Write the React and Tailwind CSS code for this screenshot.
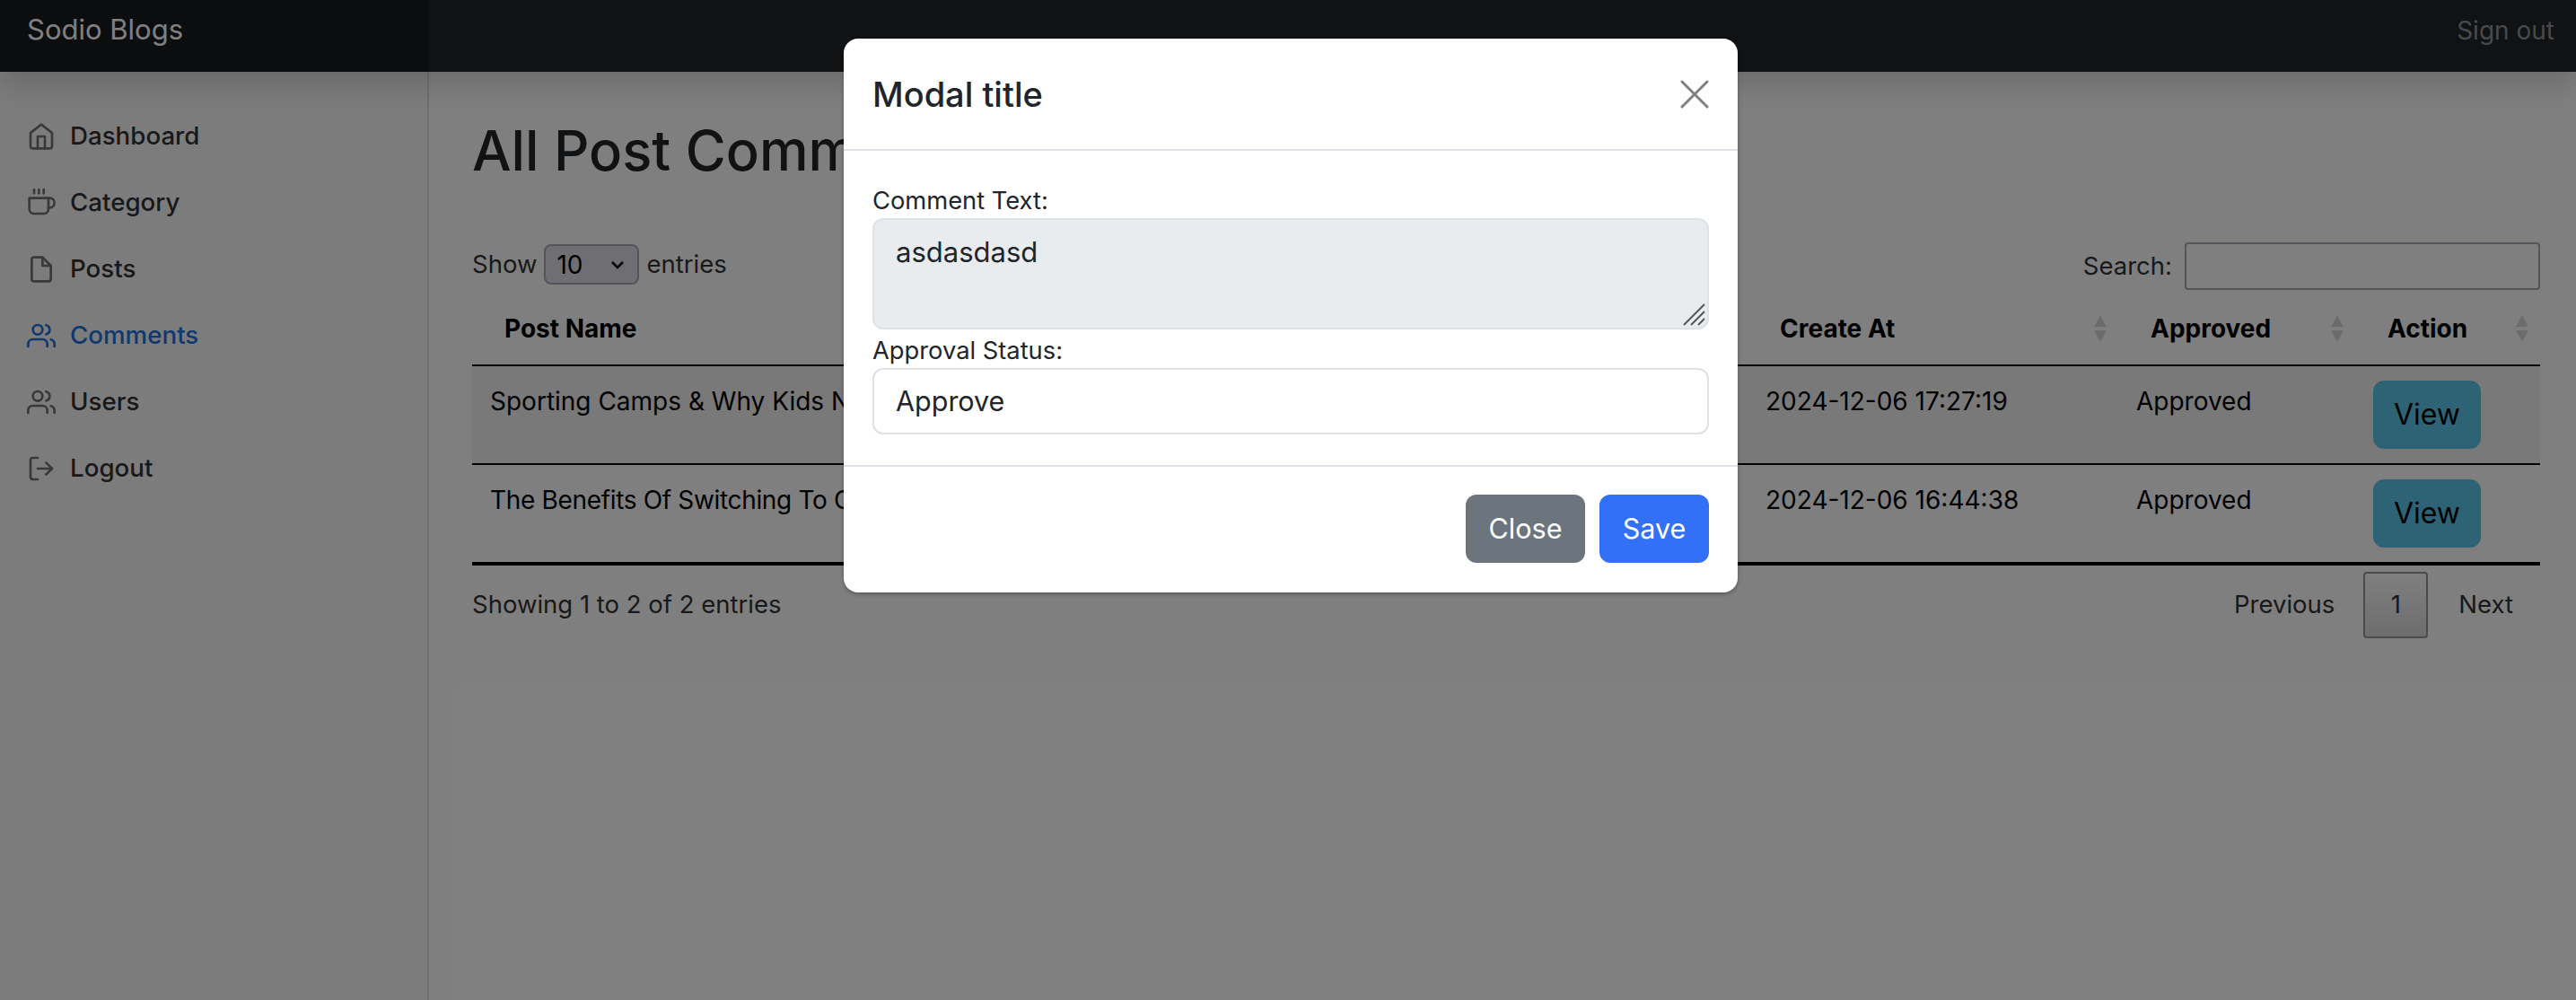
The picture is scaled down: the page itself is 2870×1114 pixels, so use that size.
import { FiHome, FiCoffee, FiFile, FiUsers, FiLogOut } from "react-icons/fi";

const navItems = [
  { label: "Dashboard", icon: FiHome },
  { label: "Category", icon: FiCoffee },
  { label: "Posts", icon: FiFile },
  { label: "Comments", icon: FiUsers, active: true },
  { label: "Users", icon: FiUsers },
  { label: "Logout", icon: FiLogOut },
];

const rows = [
  { post: "Sporting Camps & Why Kids Need Them", date: "2024-12-06 17:27:19", striped: true },
  { post: "The Benefits Of Switching To Clean Food", date: "2024-12-06 16:44:38" },
];

function SortArrows() {
  return (
    <svg width="16" height="30" viewBox="0 0 16 30" className="shrink-0 fill-black/15">
      <path d="M8 0 L15 13 L1 13 Z" />
      <path d="M8 30 L15 17 L1 17 Z" />
    </svg>
  );
}

function HeaderCell({ children }) {
  return (
    <th className="pl-9 pr-3 pb-[19px] pt-[22px] text-left font-bold">
      <div className="flex items-center justify-between">
        {children}
        <SortArrows />
      </div>
    </th>
  );
}

function Sidebar() {
  return (
    <aside className="w-[478px] shrink-0 bg-[#f8f9fa] pt-[35px] shadow-[inset_-2px_0_0_rgba(0,0,0,0.1)]">
      {navItems.map((item) => {
        const Icon = item.icon;
        return (
          <div
            key={item.label}
            className={`flex h-[74px] items-center gap-4 pl-[30px] text-[27.7px] font-medium ${
              item.active ? "text-[#2470dc]" : "text-[#333333]"
            }`}
          >
            <Icon
              size={32}
              className={item.active ? "text-[#2470dc]" : "text-[#727272]"}
            />
            {item.label}
          </div>
        );
      })}
    </aside>
  );
}

function CommentsTable() {
  return (
    <table className="w-full table-fixed border-collapse text-[28px] text-black">
      <colgroup>
        <col className="w-[1421px]" />
        <col className="w-[413px]" />
        <col className="w-[264px]" />
        <col />
      </colgroup>
      <thead>
        <tr className="border-b-2 border-black">
          <HeaderCell>Post Name</HeaderCell>
          <HeaderCell>Create At</HeaderCell>
          <HeaderCell>Approved</HeaderCell>
          <HeaderCell>Action</HeaderCell>
        </tr>
      </thead>
      <tbody>
        {rows.map((row, i) => (
          <tr
            key={row.date}
            className={`align-top ${row.striped ? "bg-black/5" : ""} ${
              i === rows.length - 1 ? "border-b-4 border-black" : "border-b-2 border-black"
            }`}
          >
            <td className={`px-5 pt-[18px] pb-4 whitespace-nowrap ${row.striped ? "" : "tracking-[-0.012em]"}`}>
              {row.post}
            </td>
            <td className="px-5 pt-[18px] pb-4">{row.date}</td>
            <td className="px-5 pt-[18px] pb-4">Approved</td>
            <td className="px-5 pt-4 pb-4">
              <button className="h-[76px] w-[120px] rounded-xl bg-[#5cc6ea] text-[32px] text-black">
                View
              </button>
            </td>
          </tr>
        ))}
      </tbody>
    </table>
  );
}

function Modal() {
  return (
    <div className="absolute inset-0 z-20 flex justify-center bg-black/50 pl-1.5 pt-[43px]">
      <div className="h-[617px] w-[996px] rounded-2xl bg-white text-[#212529] shadow-[0_2px_4px_rgba(0,0,0,0.3)]">
        <div className="flex h-[125px] items-center justify-between border-b-2 border-[#dee2e6] px-8">
          <h5 className="pt-0.5 text-[38px] font-medium">Modal title</h5>
          <svg width="32" height="32" viewBox="0 0 32 32" fill="none" strokeWidth="3" strokeLinecap="round" className="stroke-black/50">
            <path d="M2 2 L30 30 M30 2 L2 30" />
          </svg>
        </div>
        <div className="h-[350px] px-8 pt-8">
          <label className="block pt-1 text-[27.3px] leading-[39px]">Comment Text:</label>
          <div className="relative">
            <textarea
              readOnly
              value="asdasdasd"
              className="block h-[124px] w-full resize-none rounded-xl border-2 border-[#dee2e6] bg-[#e9ecef] px-6 py-3 text-[31px] leading-[48px] outline-none"
            />
            <svg width="26" height="26" viewBox="0 0 26 26" className="absolute bottom-1 right-1 stroke-[#555555]" strokeWidth="2">
              <path d="M2 25 L25 2 M10 25 L25 10 M18 25 L25 18" />
            </svg>
          </div>
          <label className="block pt-1 text-[27.3px] leading-[39px]">Approval Status:</label>
          <select className="block h-[74px] w-full appearance-none rounded-xl border-2 border-[#dee2e6] bg-white px-6 text-[30.5px] outline-none">
            <option>Approve</option>
          </select>
        </div>
        <div className="flex justify-end gap-4 border-t-2 border-[#dee2e6] px-8 pt-[31px]">
          <button className="h-[76px] w-[133px] rounded-xl bg-[#6c757d] text-[30.5px] text-white">Close</button>
          <button className="h-[76px] w-[122px] rounded-xl bg-[#3270f8] text-[30.5px] text-white">Save</button>
        </div>
      </div>
    </div>
  );
}

export default function App() {
  return (
    <div className="relative flex h-[1114px] flex-col overflow-hidden bg-white font-[Inter,sans-serif] text-[#212529]">
      <header className="relative z-10 flex h-20 shrink-0 items-center justify-between bg-[#212529] pr-6 shadow-[0_16px_32px_rgba(0,0,0,0.15)]">
        <div className="flex h-full w-[478px] items-center bg-black/25 pb-[13px] pl-[30px] text-[31px] text-white">
          Sodio Blogs
        </div>
        <span className="pb-[13px] text-[28px] text-white/50">Sign out</span>
      </header>

      <div className="flex flex-1">
        <Sidebar />
        <main className="min-w-0 flex-1 pl-12 pr-10 pt-7">
          <h1 className="text-[61.5px] font-[550] leading-[120px] text-[#212529]">All Post Comments</h1>

          <div className="mt-[42px] flex h-[53px] items-start justify-between text-[27.5px] text-[#333333]">
            <div className="flex items-center gap-2 pt-0.5">
              Show
              <div className="relative">
                <select className="block h-[45px] w-[106px] appearance-none rounded-lg border-2 border-[#a8a8b4] bg-[#dddde6] px-3 text-[28px] text-black">
                  <option>10</option>
                </select>
                <svg width="16" height="10" viewBox="0 0 16 10" fill="none" strokeWidth="2.5" className="absolute right-4 top-[18px] stroke-black">
                  <path d="M2 2 L8 8 L14 2" />
                </svg>
              </div>
              entries
            </div>
            <div className="flex items-center gap-3.5">
              Search:
              <input className="h-[53px] w-[396px] rounded border-2 border-[#a8a8b4] bg-transparent" />
            </div>
          </div>

          <CommentsTable />

          <div className="mt-[7px] flex items-center justify-between text-[27.5px] text-[#333333]">
            <span>Showing 1 to 2 of 2 entries</span>
            <div className="flex items-center">
              <span className="mr-8">Previous</span>
              <span className="flex h-[74px] w-[72px] items-center justify-center rounded-sm border-2 border-[#979797] bg-gradient-to-b from-white to-[#dcdcdc]">
                1
              </span>
              <span className="ml-[34px] mr-[30px]">Next</span>
            </div>
          </div>
        </main>
      </div>

      <Modal />
    </div>
  );
}
